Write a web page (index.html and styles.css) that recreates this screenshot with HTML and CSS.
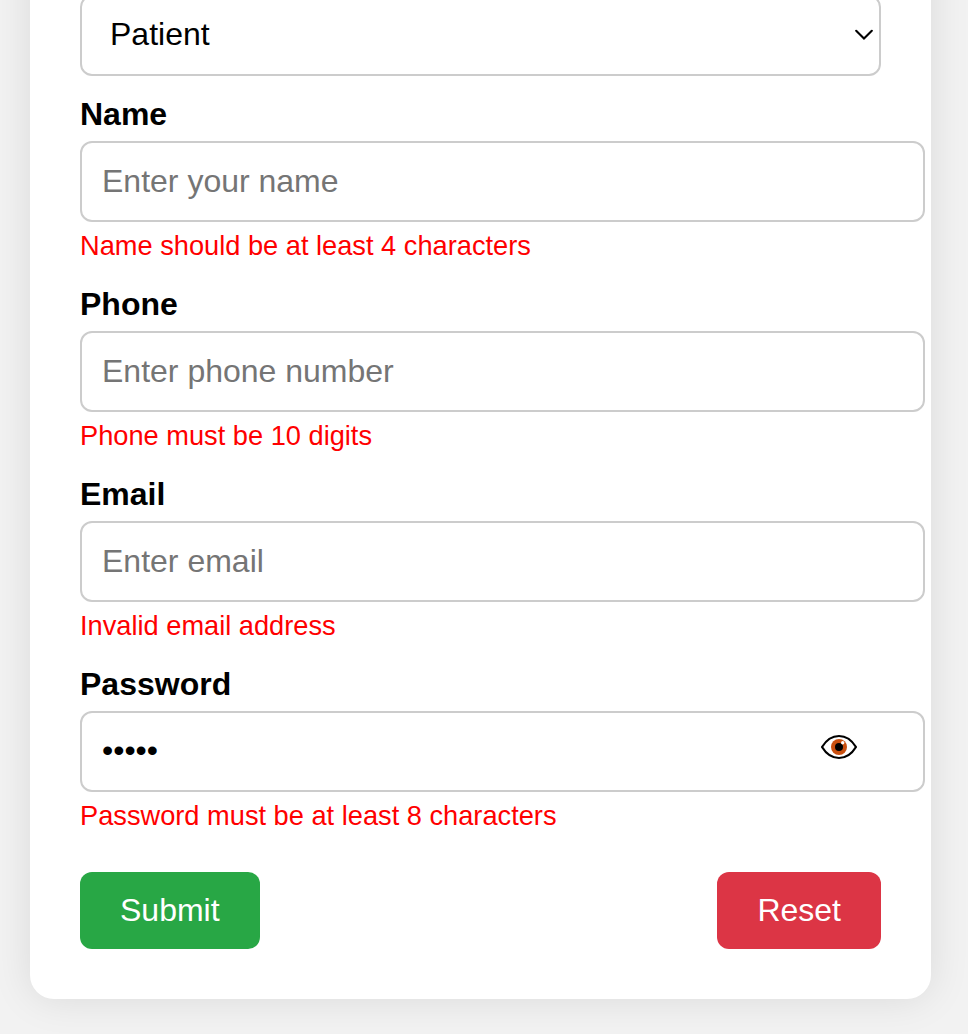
FILE: index.html
```html
<!DOCTYPE html>
<html lang="en">
<head>
<meta charset="utf-8">
<title>Registration</title>
<link rel="stylesheet" href="styles.css">
</head>
<body>
<form class="card">
  <div class="role"><span>Patient</span>
    <svg class="chevron" width="18" height="12" viewBox="0 0 18 12"><path d="M1.2 1.8 9 9.6 16.8 1.8" fill="none" stroke="#000" stroke-width="2.1" stroke-linecap="round"/></svg>
  </div>
  <div class="field">
    <label class="label" for="name">Name</label>
    <input class="input" id="name" type="text" placeholder="Enter your name">
    <div class="error">Name should be at least 4 characters</div>
  </div>
  <div class="field">
    <label class="label" for="phone">Phone</label>
    <input class="input" id="phone" type="text" placeholder="Enter phone number">
    <div class="error">Phone must be 10 digits</div>
  </div>
  <div class="field">
    <label class="label" for="email">Email</label>
    <input class="input" id="email" type="text" placeholder="Enter email">
    <div class="error">Invalid email address</div>
  </div>
  <div class="field">
    <label class="label" for="password">Password</label>
    <div class="password">
      <input class="input secret" id="password" type="password" value="abcde">
      <svg class="eye" width="38" height="28" viewBox="0 0 38 28"><path d="M2 14C6 7.5 12 3 19 3S32 7.5 36 14C32 20.5 26 25 19 25S6 20.5 2 14Z" fill="#fff" stroke="#000" stroke-width="2.2" stroke-linejoin="round"/><circle cx="19" cy="14" r="8" fill="#ca5010"/><circle cx="19" cy="14" r="4" fill="#000"/><circle cx="22.7" cy="9.8" r="1.7" fill="#fff"/></svg>
    </div>
    <div class="error">Password must be at least 8 characters</div>
  </div>
  <div class="actions">
    <button class="button submit" type="button">Submit</button>
    <button class="button reset" type="button">Reset</button>
  </div>
</form>
</body>
</html>
```
FILE: styles.css
```css
html {
  overflow: hidden;
}
body {
  display: flow-root;
  margin: 0;
  height: 1034px;
  overflow: hidden;
  background: #f2f2f2;
  font-family: "Liberation Sans", Arial, sans-serif;
  font-size: 32px;
}
.card {
  box-sizing: border-box;
  width: 901px;
  height: 1099px;
  margin: -100px 0 0 30px;
  padding: 95px 50px 0;
  background: #fff;
  border-radius: 24px;
  box-shadow: 0 0 40px rgba(0, 0, 0, 0.1);
}
.role {
  box-sizing: border-box;
  height: 81px;
  padding: 0 6px 2px 28px;
  display: flex;
  align-items: center;
  justify-content: space-between;
  border: 2px solid #ccc;
  border-radius: 12px;
  margin-bottom: 20px;
}
.field {
  height: 190px;
}
.label {
  display: block;
  height: 45px;
  line-height: 37px;
  font-weight: bold;
}
.input {
  display: block;
  box-sizing: border-box;
  width: 845px;
  height: 81px;
  padding: 0 20px;
  border: 2px solid #ccc;
  border-radius: 12px;
  background: #fff;
  color: #000;
  font: inherit;
}
.input::placeholder {
  color: #757575;
}
.secret {
  padding-bottom: 2px;
}
.error {
  padding-top: 8px;
  line-height: 31px;
  font-size: 27.23px;
  color: #f00;
}
.password {
  position: relative;
}
.eye {
  position: absolute;
  left: 740px;
  top: 22px;
}
.actions {
  display: flex;
  justify-content: space-between;
  padding-top: 16px;
}
.button {
  height: 77px;
  padding: 0 40px;
  border: 0;
  border-radius: 12px;
  color: #fff;
  font: inherit;
}
.submit {
  background: #28a745;
}
.reset {
  background: #dc3545;
}
```
